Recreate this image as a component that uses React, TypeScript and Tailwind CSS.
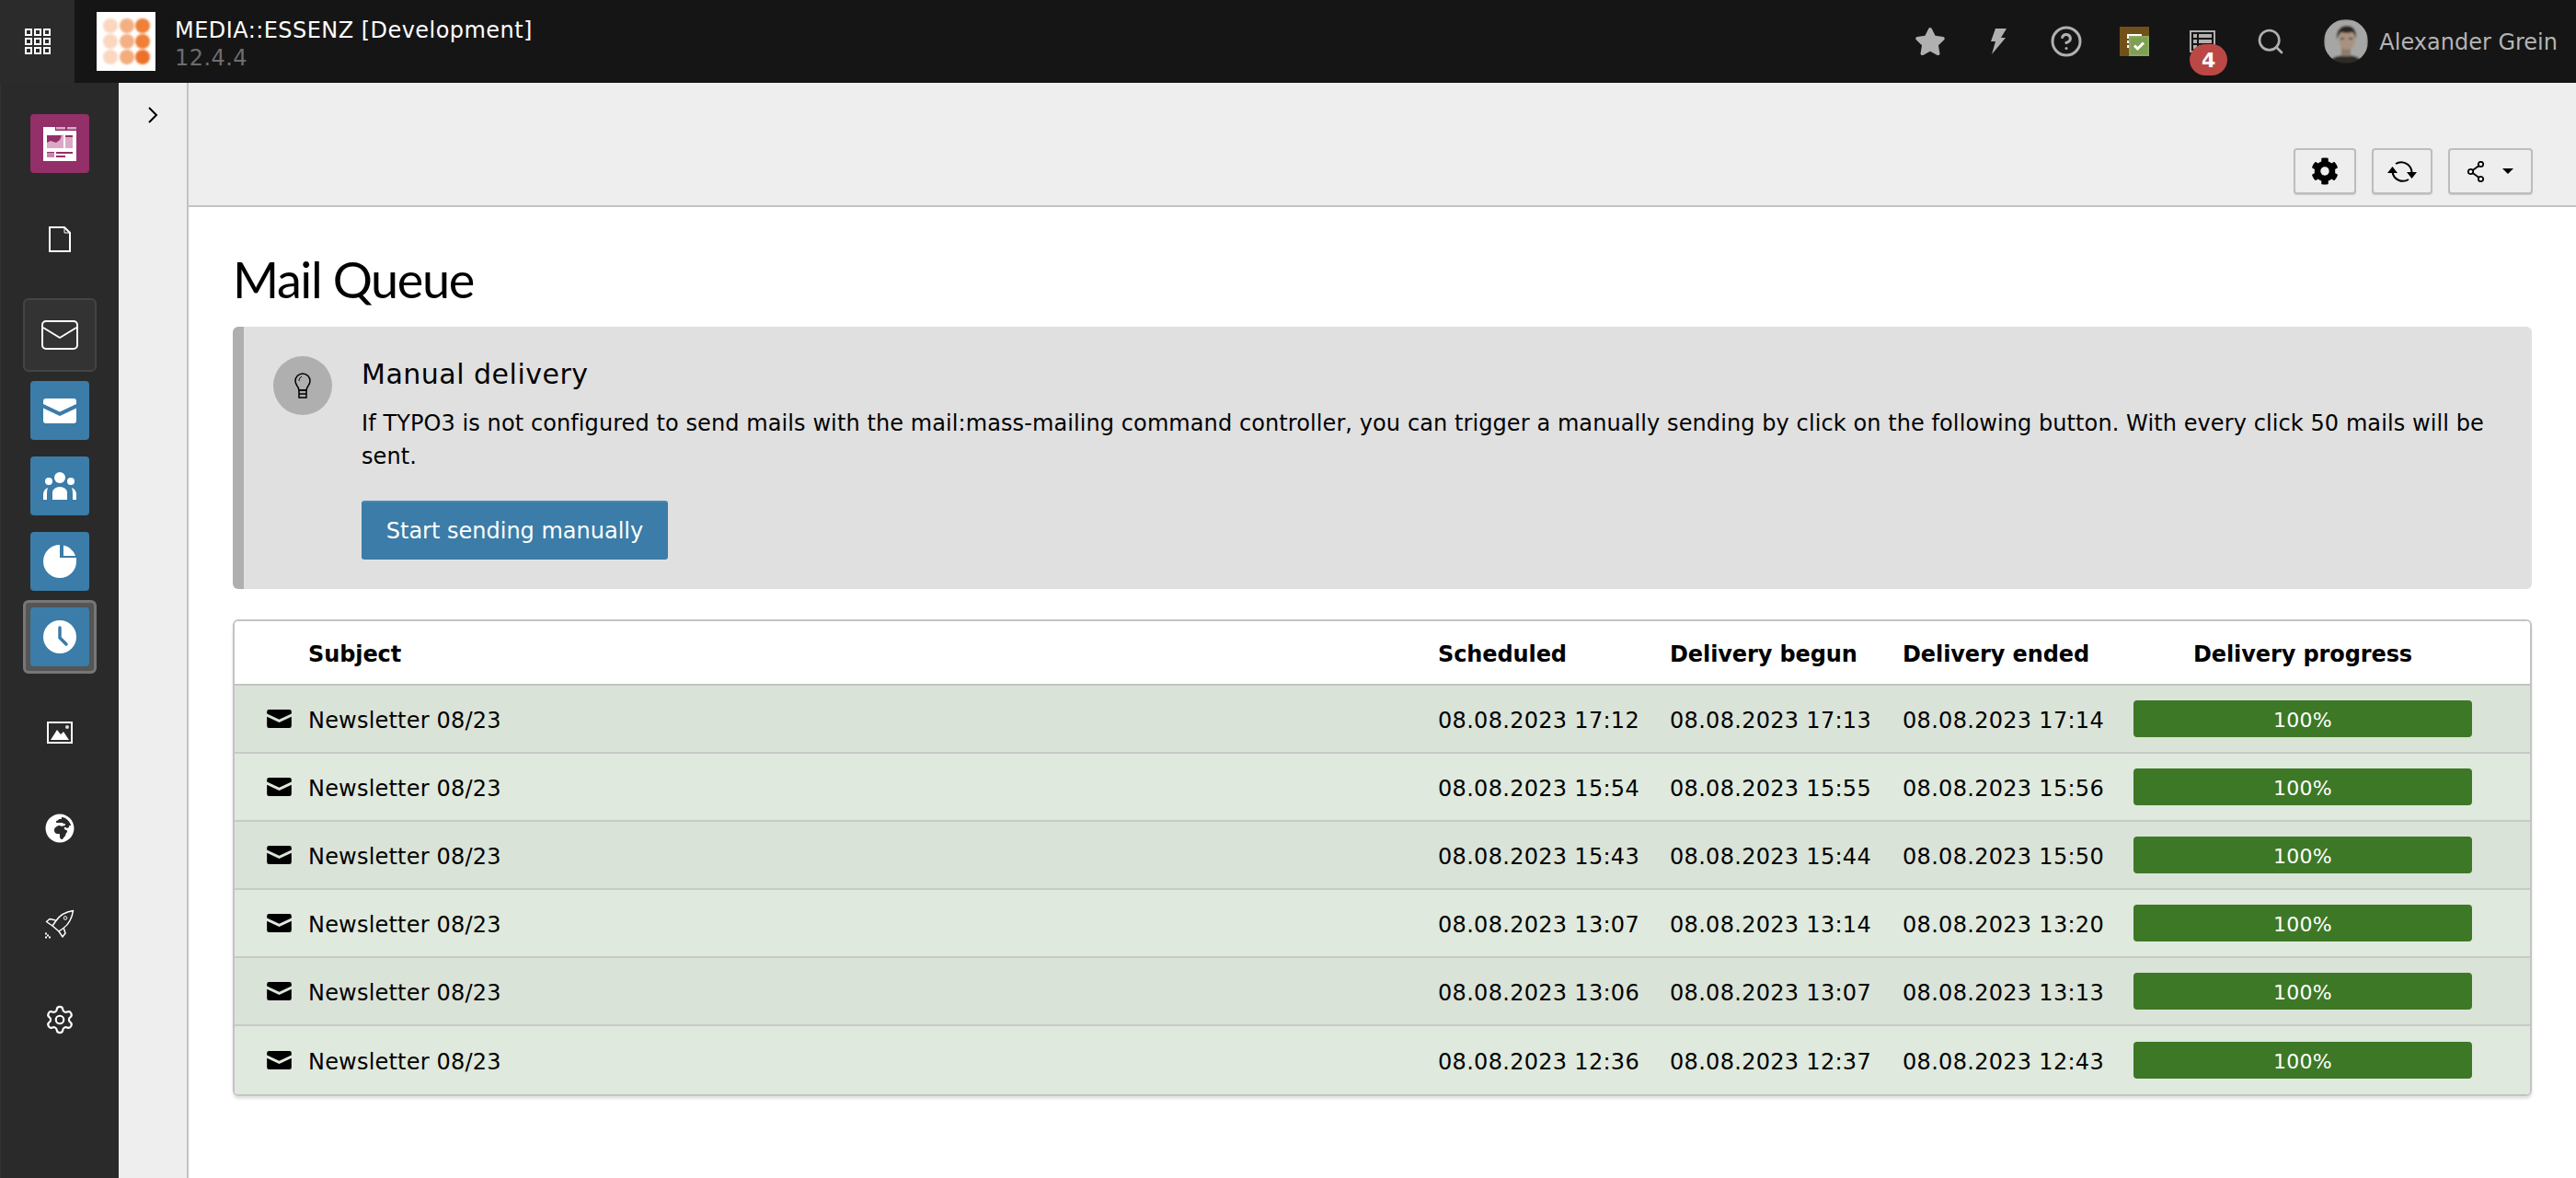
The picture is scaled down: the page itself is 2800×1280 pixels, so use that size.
import React from 'react';
import { Search, CircleHelp, Settings } from 'lucide-react';
import { FaStar, FaCog, FaGlobeAfrica } from 'react-icons/fa';

const rows = [
  ['08.08.2023 17:12', '08.08.2023 17:13', '08.08.2023 17:14'],
  ['08.08.2023 15:54', '08.08.2023 15:55', '08.08.2023 15:56'],
  ['08.08.2023 15:43', '08.08.2023 15:44', '08.08.2023 15:50'],
  ['08.08.2023 13:07', '08.08.2023 13:14', '08.08.2023 13:20'],
  ['08.08.2023 13:06', '08.08.2023 13:07', '08.08.2023 13:13'],
  ['08.08.2023 12:36', '08.08.2023 12:37', '08.08.2023 12:43'],
];

const cols = 'grid grid-cols-[80px_1228px_252px_253px_251px_1fr] items-center';

const MailFilled = ({ className }: { className: string }) => (
  <svg viewBox="0 0 36 27" className={className} fill="currentColor">
    <path d="M3 0H33a3 3 0 0 1 3 3V6L18 14.500 0 6V3a3 3 0 0 1 3-3z" />
    <path d="M0 10.500L18 19 36 10.500V24a3 3 0 0 1-3 3H3a3 3 0 0 1-3-3z" />
  </svg>
);

const AppGrid = () => (
  <svg viewBox="0 0 28 28" className="w-[28px] h-[28px]" fill="none" stroke="#fff" strokeWidth="2">
    {[1, 11, 21].map((y) =>
      [1, 11, 21].map((x) => <rect key={`${x}-${y}`} x={x} y={y} width="6" height="6" />),
    )}
  </svg>
);

const Logo = () => (
  <svg viewBox="0 0 64 64" className="w-[64px] h-[64px] bg-white">
    <defs>
      <filter id="soft">
        <feGaussianBlur stdDeviation="1" />
      </filter>
    </defs>
    <g filter="url(#soft)">
      <ellipse cx="15" cy="15" rx="8" ry="8" fill="#fad7bf" />
      <ellipse cx="33" cy="15" rx="8" ry="8" fill="#f3b084" />
      <ellipse cx="50" cy="15" rx="8" ry="8" fill="#ee8037" />
      <ellipse cx="15" cy="32" rx="8" ry="8" fill="#fad7bf" />
      <ellipse cx="33" cy="32" rx="8" ry="8" fill="#f3b084" />
      <ellipse cx="50" cy="32" rx="8" ry="8" fill="#ee8037" />
      <ellipse cx="15" cy="49" rx="8" ry="8" fill="#fad7bf" />
      <ellipse cx="33" cy="49" rx="8" ry="8" fill="#f3ac7c" />
      <ellipse cx="50" cy="49" rx="8" ry="8" fill="#ec7229" />
    </g>
  </svg>
);

const Avatar = () => (
  <svg viewBox="0 0 48 48" className="w-[48px] h-[48px] rounded-full">
    <defs>
      <filter id="photo">
        <feGaussianBlur stdDeviation="0.8" />
      </filter>
    </defs>
    <g filter="url(#photo)">
      <rect width="48" height="48" fill="#a6a6a4" />
      <path d="M6 48c1-6 8-9 18-9s17 3 18 9z" fill="#2d2c28" />
      <rect x="19" y="28" width="10" height="12" fill="#8f7c6a" />
      <ellipse cx="25" cy="22" rx="9" ry="11" fill="#a8927f" />
      <path d="M14 22C13 11 19 7 25 7s11 4 10 14c-1-3-2-6-4-7-5 1-8 1-12 0-2 1-4 5-5 8z" fill="#2b2723" />
      <rect x="18" y="20" width="4" height="2" fill="#544a40" />
      <rect x="27" y="20" width="4" height="2" fill="#544a40" />
    </g>
  </svg>
);

const Workspace = () => (
  <div className="relative w-[32px] h-[32px] bg-[#71501a]">
    <svg viewBox="0 0 32 32" className="absolute inset-0 w-[32px] h-[32px]">
      <path d="M8 8H24V10H10V13H8zM8 15H10V18H8zM8 20H10V23H8z" fill="#fff" />
      <rect x="10" y="10" width="22" height="22" fill="#8aa862" />
      <rect x="12" y="12" width="18" height="18" fill="#7f9f52" />
      <path d="M16 20.500l3.500 3.500L26 17.500" fill="none" stroke="#fff" strokeWidth="3" />
    </svg>
  </div>
);

const ListIcon = () => (
  <svg viewBox="0 0 28 24" className="w-[28px] h-[24px]" fill="#b0b0b0">
    <path d="M1 1h26v22H1z" fill="none" stroke="#b0b0b0" strokeWidth="2" />
    <rect x="4" y="4" width="4" height="4" />
    <rect x="10" y="4" width="14" height="4" />
    <rect x="4" y="10" width="4" height="4" />
    <rect x="10" y="10" width="14" height="4" />
    <rect x="4" y="16" width="4" height="4" />
    <rect x="10" y="16" width="14" height="4" />
  </svg>
);

const NewsIcon = () => (
  <svg viewBox="0 0 36 37" className="w-[36px] h-[37px]">
    <path d="M0 0H13V4H36V37H0z" fill="#fff" />
    <rect x="14" y="0" width="10" height="2.500" fill="#d9a9c6" />
    <rect x="26" y="0" width="10" height="2.500" fill="#d9a9c6" />
    <rect x="4" y="9" width="18" height="14" fill="#932f69" />
    <path d="M4 23v-6l4-2 3 1 3 1 4-3 2-5 2-1v15z" fill="#d9a9c6" />
    <rect x="24" y="9" width="8" height="2" fill="#932f69" />
    <rect x="24" y="11" width="8" height="12" fill="#d9a9c6" />
    <rect x="4" y="27" width="8" height="1.500" fill="#932f69" />
    <rect x="4" y="28.500" width="8" height="4.500" fill="#c985ab" />
    <rect x="14" y="27" width="18" height="2" fill="#932f69" />
    <rect x="14" y="31" width="10" height="2" fill="#932f69" />
  </svg>
);

const PageIcon = () => (
  <svg viewBox="0 0 24 28" className="w-[24px] h-[28px]" fill="none" stroke="#fff" strokeWidth="2">
    <path d="M1 1H17L23 7V27H1z" />
    <path d="M17 1V7H23" strokeWidth="1" />
  </svg>
);

const MailOutline = () => (
  <svg viewBox="0 0 40 32" className="w-[40px] h-[32px]" fill="none" stroke="#fff" strokeWidth="2">
    <rect x="1" y="1" width="38" height="30" rx="4" />
    <path d="M2 8L20 19 38 8" strokeLinejoin="round" />
  </svg>
);

const UsersIcon = () => (
  <svg viewBox="0 0 36 30" className="w-[36px] h-[30px]" fill="#fff">
    <circle cx="18" cy="6" r="6" />
    <circle cx="6" cy="10" r="4" />
    <circle cx="30" cy="10" r="4" />
    <path d="M10 30V22a8 6 0 0 1 16 0v8z" />
    <path d="M0 30v-6c0-3 2-6 5-7-.7 2-1 4-1 7v6z" />
    <path d="M36 30v-6c0-3-2-6-5-7 .7 2 1 4 1 7v6z" />
  </svg>
);

const PieIcon = () => (
  <svg viewBox="0 0 36 36" className="w-[36px] h-[36px]" fill="#fff">
    <path d="M18 0V14H36V18A18 18 0 1 1 18 0z" />
    <path d="M22 .5A18 18 0 0 1 35 12H22z" />
  </svg>
);

const ClockIcon = () => (
  <svg viewBox="0 0 36 36" className="w-[36px] h-[36px]">
    <circle cx="18" cy="18" r="18" fill="#fff" />
    <path d="M18 8V19L25 26" fill="none" stroke="#3b7ca8" strokeWidth="3.500" strokeLinecap="round" strokeLinejoin="round" />
  </svg>
);

const ImageIcon = () => (
  <svg viewBox="0 0 28 24" className="w-[28px] h-[24px]">
    <rect x="1" y="1" width="26" height="22" fill="none" stroke="#fff" strokeWidth="2" />
    <path d="M4 20L11 9 15 14 18 11 24 20z" fill="#fff" />
    <circle cx="22" cy="6" r="2" fill="#ddd" />
  </svg>
);

const RocketIcon = () => (
  <svg viewBox="0 0 32 32" className="w-[32px] h-[32px]" fill="none" stroke="#fff" strokeWidth="1.500" strokeLinejoin="round">
    <path d="M30.500 1.500C24 2.500 16 6 11.500 13L8 18l7 6 5-3.500C26 16 29.500 8 30.500 1.500z" />
    <path d="M11.500 12L5 10.500 1.500 13.500 8 18" />
    <path d="M20.500 21l1.500 5-3 4-4-6" />
    <circle cx="22" cy="9.500" r="1.800" strokeWidth="1" />
    <path d="M0 25.500h2v2h-2zM2 27.500h2v2h-2zM0 29.500h2v2h-2zM4 29.500h2v2h-2z" fill="#fff" stroke="none" />
  </svg>
);

const BoltIcon = () => (
  <svg viewBox="0 0 18 28" className="w-[18px] h-[28px]" fill="#b0b0b0">
    <path d="M6 0H18L12 10H17L2 28 6 14H1z" />
  </svg>
);

const BulbIcon = () => (
  <svg viewBox="0 0 18 28" className="w-[18px] h-[28px]" fill="none" stroke="#000" strokeWidth="1.500">
    <path d="M9 1a8 8 0 0 0-8 8c0 3 2 5 3 7 .6 1 .8 2 .8 3h8.400c0-1 .2-2 .8-3 1-2 3-4 3-7a8 8 0 0 0-8-8z" />
    <path d="M5 19h8v8H5zM5 23h8" />
    <path d="M5 9c0-2 1-4 3-5" strokeWidth="1" />
  </svg>
);

const RefreshIcon = () => (
  <svg viewBox="0 0 32 25" className="w-[32px] h-[25px]" fill="none" stroke="#000" strokeWidth="2">
    <path d="M9 4A11.500 11.500 0 0 1 26.500 13" />
    <path d="M23 21A11.500 11.500 0 0 1 5.500 13" />
    <path d="M0 14H11L5.500 7z" fill="#000" stroke="none" />
    <path d="M21 13H32L26.500 20z" fill="#000" stroke="none" />
  </svg>
);

const ShareIcon = () => (
  <svg viewBox="0 0 18 23" className="w-[18px] h-[23px]" fill="none" stroke="#000" strokeWidth="1.800">
    <circle cx="14.500" cy="3.500" r="2.700" />
    <circle cx="14.500" cy="19.500" r="2.700" />
    <circle cx="3.500" cy="11.500" r="2.700" />
    <path d="M5.800 10L12.200 5.200M5.800 13L12.200 17.800" />
  </svg>
);

const ModuleBox = ({ children, color = 'bg-[#3b7ca8]' }: { children: React.ReactNode; color?: string }) => (
  <div className={`w-[64px] h-[64px] rounded-[4px] flex items-center justify-center ${color}`}>{children}</div>
);

const topIcon = 'w-[74px] flex items-center justify-center';
const navItem = 'h-[104px] flex items-center justify-center';
const modItem = 'h-[82px] flex items-center justify-center';
const docButton =
  'h-[50px] bg-[#eeeeee] border-2 border-[#bdbdbd] rounded-[4px] flex items-center justify-center shadow-[0_1px_1px_rgba(0,0,0,0.15)]';

export default function App() {
  return (
    <div className="h-screen overflow-hidden flex flex-col bg-white text-black text-[24px] tracking-[0.3px] font-['DejaVu_Sans',sans-serif]">
      <header className="h-[90px] shrink-0 bg-[#151515] flex items-center">
        <div className="w-[81px] h-full bg-[#2b2b2b] flex items-center justify-center">
          <AppGrid />
        </div>
        <div className="ml-[24px]">
          <Logo />
        </div>
        <div className="ml-[21px] pt-[6px] flex flex-col tracking-[0.45px]">
          <span className="text-white leading-[30px]">MEDIA::ESSENZ [Development]</span>
          <span className="text-[#6d6d6d] leading-[30px]">12.4.4</span>
        </div>
        <div className="ml-auto flex items-center pr-[20px] text-[#b0b0b0]">
          <div className={topIcon}>
            <FaStar className="w-[34px] h-[32px]" />
          </div>
          <div className={topIcon}>
            <BoltIcon />
          </div>
          <div className={topIcon}>
            <CircleHelp className="w-[36px] h-[36px]" strokeWidth={2} />
          </div>
          <div className={topIcon}>
            <Workspace />
          </div>
          <div className={`${topIcon} relative`}>
            <ListIcon />
            <span className="absolute left-[23px] top-[15px] w-[41px] h-[34px] rounded-full bg-[#bb4845] text-white text-[22px] font-bold flex items-center justify-center">
              4
            </span>
          </div>
          <div className={topIcon}>
            <Search className="w-[32px] h-[32px]" strokeWidth={2} />
          </div>
          <div className="ml-[21px]">
            <Avatar />
          </div>
          <span className="ml-[12px] text-[#b4b4b4] tracking-normal pt-[2px]">Alexander Grein</span>
        </div>
      </header>

      <div className="flex-1 flex min-h-0">
        <aside className="w-[129px] shrink-0 bg-[#2a2a2a] border-l border-[#333333] pt-[14px] flex flex-col">
          <div className={navItem}>
            <ModuleBox color="bg-[#932f69]">
              <NewsIcon />
            </ModuleBox>
          </div>
          <div className={navItem}>
            <PageIcon />
          </div>
          <div className="my-[11px]">
            <div className={modItem}>
              <div className="w-[80px] h-[80px] bg-[#333333] border-2 border-[#444444] rounded-[6px] flex items-center justify-center">
                <MailOutline />
              </div>
            </div>
            <div className={modItem}>
              <ModuleBox>
                <MailFilled className="w-[36px] h-[27px] text-white" />
              </ModuleBox>
            </div>
            <div className={modItem}>
              <ModuleBox>
                <UsersIcon />
              </ModuleBox>
            </div>
            <div className={modItem}>
              <ModuleBox>
                <PieIcon />
              </ModuleBox>
            </div>
            <div className={modItem}>
              <div className="w-[80px] h-[80px] bg-[#555555] border-[3px] border-[#777777] rounded-[6px] flex items-center justify-center">
                <ModuleBox>
                  <ClockIcon />
                </ModuleBox>
              </div>
            </div>
          </div>
          <div className={navItem}>
            <ImageIcon />
          </div>
          <div className={navItem}>
            <FaGlobeAfrica className="w-[32px] h-[32px] text-white" />
          </div>
          <div className={navItem}>
            <RocketIcon />
          </div>
          <div className={navItem}>
            <Settings className="w-[34px] h-[34px] text-white" strokeWidth={1.5} />
          </div>
        </aside>

        <div className="w-[76px] shrink-0 bg-[#eeeeee] border-r-2 border-[#c3c3c3] flex justify-center pt-[26px]">
          <svg viewBox="0 0 12 18" className="w-[12px] h-[18px]" fill="none" stroke="#000" strokeWidth="2">
            <path d="M2 1l8 8-8 8" />
          </svg>
        </div>

        <main className="flex-1 min-w-0 flex flex-col">
          <div className="h-[135px] shrink-0 bg-[#eeeeee] border-b-2 border-[#c3c3c3] flex items-end justify-end gap-[17px] pr-[47px] pb-[12px]">
            <div className={`${docButton} w-[68px]`}>
              <FaCog className="w-[30px] h-[30px]" />
            </div>
            <div className={`${docButton} w-[66px]`}>
              <RefreshIcon />
            </div>
            <div className={`${docButton} w-[92px] gap-[20px]`}>
              <ShareIcon />
              <svg viewBox="0 0 12 6" className="w-[12px] h-[6px]">
                <path d="M0 0H12L6 6z" fill="#000" />
              </svg>
            </div>
          </div>

          <div className="px-[48px] pt-[48px]">
            <h1 className="h-[62px] text-[54px] leading-[62px] tracking-[-1.4px] font-['Lato',sans-serif] mb-[20px]">
              Mail Queue
            </h1>

            <section className="bg-[#e0e0e0] border-l-[12px] border-[#afafaf] rounded-[6px] flex px-[32px] pt-[32px] pb-[32px] mb-[33px]">
              <div className="w-[64px] h-[64px] rounded-full bg-[#afafaf] flex items-center justify-center shrink-0">
                <BulbIcon />
              </div>
              <div className="ml-[32px]">
                <h2 className="text-[30px] leading-[40px] tracking-[0.5px]">Manual delivery</h2>
                <p className="mt-[15px] leading-[36px] tracking-[0.09px]">
                  If TYPO3 is not configured to send mails with the mail:mass-mailing command controller, you can trigger a manually sending by click on the following button. With every click 50 mails will be sent.
                </p>
                <button className="mt-[30px] h-[64px] w-[333px] bg-[#3b7ca8] border-t-2 border-[#4a88b2] rounded-[3px] text-white text-center tracking-normal">
                  Start sending manually
                </button>
              </div>
            </section>

            <div className="border-2 border-[#c3c3c3] rounded-[6px] overflow-hidden shadow-[0_3px_3px_rgba(0,0,0,0.12)]">
              <div className={`${cols} h-[70px] bg-white font-bold border-b-2 border-[#c3c3c3] tracking-[-0.1px]`}>
                <span />
                <span className="pt-[4px]">Subject</span>
                <span className="pt-[4px]">Scheduled</span>
                <span className="pt-[4px]">Delivery begun</span>
                <span className="pt-[4px]">Delivery ended</span>
                <span className="w-[368px] text-center pt-[4px]">Delivery progress</span>
              </div>
              {rows.map((row, i) => (
                <div
                  key={i}
                  className={`${cols} h-[74px] border-[#c9c9c9] ${i % 2 === 0 ? 'bg-[#dae3d8]' : 'bg-[#dfe9dd]'} ${i < rows.length - 1 ? 'border-b-2' : 'h-[72px]'}`}
                >
                  <span className="pl-[35px]">
                    <MailFilled className="w-[27px] h-[20px]" />
                  </span>
                  <span className="pt-[4px] tracking-[0.2px]">Newsletter 08/23</span>
                  <span className="pt-[4px]">{row[0]}</span>
                  <span className="pt-[4px]">{row[1]}</span>
                  <span className="pt-[4px]">{row[2]}</span>
                  <div className="w-[368px] h-[40px] bg-[#3d7826] rounded-[4px] text-white text-[22px] pt-[2px] flex items-center justify-center">
                    100%
                  </div>
                </div>
              ))}
            </div>
          </div>
        </main>
      </div>
    </div>
  );
}
